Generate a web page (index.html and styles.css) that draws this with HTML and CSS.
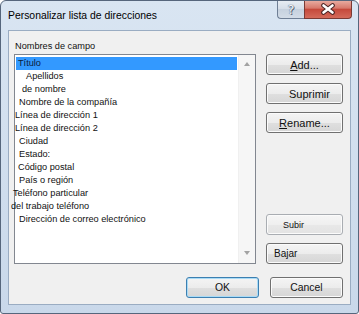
FILE: index.html
```html
<!DOCTYPE html>
<html lang="es">
<head>
    <meta charset="UTF-8">
    <title>Personalizar lista de direcciones</title>
    <link rel="stylesheet" href="styles.css">
</head>
<body>
    <div class="window">
        <div class="titlebar">
            <span class="title">Personalizar lista de direcciones</span>
            <div class="caption-btns">
                <button class="cap-btn help-btn">?</button>
                <button class="cap-btn close-btn">
                    <svg width="16" height="12" viewBox="0 0 16 12">
                        <path d="M3.5 2.5 L12.5 9.5 M12.5 2.5 L3.5 9.5" stroke="#4a2424" stroke-width="4.6" stroke-linecap="round"/>
                        <path d="M3.5 2.5 L12.5 9.5 M12.5 2.5 L3.5 9.5" stroke="#ffffff" stroke-width="2.6" stroke-linecap="round"/>
                    </svg>
                </button>
            </div>
        </div>

        <div class="client">
            <div class="field-label">Nombres de campo</div>

            <div class="main-row">
                <div class="listbox">
                    <ul class="field-list">
                        <li class="selected ind-2">Título</li>
                        <li class="ind-11">Apellidos</li>
                        <li class="ind-7">de nombre</li>
                        <li class="ind-4">Nombre de la compañía</li>
                        <li class="ind-0">Línea de dirección 1</li>
                        <li class="ind-0">Línea de dirección 2</li>
                        <li class="ind-4">Ciudad</li>
                        <li class="ind-4">Estado:</li>
                        <li class="ind-3">Código postal</li>
                        <li class="ind-4">País o región</li>
                        <li class="ind-n2">Teléfono particular</li>
                        <li class="ind-n4">del trabajo teléfono</li>
                        <li class="ind-4">Dirección de correo electrónico</li>
                    </ul>
                    <div class="scrollbar">
                        <span class="arrow arrow-up"></span>
                        <span class="arrow arrow-down"></span>
                    </div>
                </div>

                <div class="side-btns">
                    <div class="btn-group">
                        <button class="btn btn-big"><u>A</u>dd...</button>
                        <button class="btn btn-big btn-suprimir">Suprimir</button>
                        <button class="btn btn-big"><u>R</u>ename...</button>
                    </div>
                    <div class="btn-group">
                        <button class="btn btn-subir">Subir</button>
                        <button class="btn btn-bajar">Bajar</button>
                    </div>
                </div>
            </div>

            <div class="footer">
                <button class="btn btn-footer btn-default">OK</button>
                <button class="btn btn-footer">Cancel</button>
            </div>
        </div>
    </div>
</body>
</html>
```

FILE: styles.css
```css
:root {
    --frame-top: #d9e5f2;
    --frame-bottom: #c9d8ea;
    --client-bg: #f0f0f0;
    --text: #111111;
}

body {
    margin: 0;
    font-family: 'Liberation Sans', Arial, sans-serif;
    color: var(--text);
}

.window {
    width: 359px;
    height: 314px;
    box-sizing: border-box;
    border: 1px solid #56667c;
    border-radius: 6px 6px 3px 3px;
    background: linear-gradient(var(--frame-top), var(--frame-bottom));
    display: flex;
    flex-direction: column;
    overflow: hidden;
}

/* barra de titulo */
.titlebar {
    height: 29px;
    display: flex;
    justify-content: space-between;
    align-items: flex-start;
    padding-left: 7px;
    flex-shrink: 0;
}

.title {
    font-size: 10.4px;
    line-height: 29px;
    color: #000;
}

.caption-btns {
    display: flex;
    margin-top: -1px;
    margin-right: 6px;
}

.cap-btn {
    height: 19px;
    padding: 0;
    border: 1px solid #6f7f95;
    border-top: none;
    display: flex;
    align-items: center;
    justify-content: center;
}

.help-btn {
    width: 27px;
    border-right: none;
    border-radius: 0 0 0 4px;
    background: linear-gradient(#e9eef4, #d5dde8 50%, #c6d1de 51%, #d3dce7);
    font-family: 'DejaVu Sans', sans-serif;
    font-size: 13px;
    color: #f5f7fa;
    text-shadow: 0 0 1px #59667a, 0 0 1px #59667a, 1px 1px 0 #59667a;
}

.close-btn {
    width: 48px;
    border-color: #7b3a34;
    border-radius: 0 0 4px 0;
    background: linear-gradient(#eab1a6, #d7796c 45%, #c5493b 52%, #d46a5a 100%);
}

/* area cliente */
.client {
    margin: 0 7px 8px;
    flex: 1;
    border: 1px solid #9aacc2;
    background: var(--client-bg);
    padding: 9px 7px 6px 5px;
    display: flex;
    flex-direction: column;
}

.field-label {
    font-size: 9.2px;
    line-height: 12px;
    padding-left: 1px;
    margin-bottom: 2px;
}

.main-row {
    display: flex;
    gap: 10px;
    height: 210px;
}

.listbox {
    width: 242px;
    box-sizing: border-box;
    border: 1px solid #828790;
    background: #ffffff;
    display: flex;
}

.field-list {
    list-style: none;
    margin: 0;
    padding: 2px 0 0;
    flex: 1;
    font-size: 9.2px;
    line-height: 13px;
    white-space: nowrap;
}

.field-list li.selected {
    background: #3399ff;
    margin: 0 1px;
    color: #0b1c3c;
}

.ind-n4 { text-indent: -4px; }
.ind-n2 { text-indent: -2px; }
.ind-0 { text-indent: 0; }
.ind-2 { text-indent: 2px; }
.ind-3 { text-indent: 3px; }
.ind-4 { text-indent: 4px; }
.ind-7 { text-indent: 7px; }
.ind-11 { text-indent: 11px; }

.scrollbar {
    width: 17px;
    background: #f6f6f6;
    border-left: 1px solid #f0f0f0;
    display: flex;
    flex-direction: column;
    justify-content: space-between;
    align-items: center;
    padding: 7px 0 8px;
    box-sizing: border-box;
}

.arrow {
    width: 0;
    height: 0;
    border-left: 3.5px solid transparent;
    border-right: 3.5px solid transparent;
}

.arrow-up {
    border-bottom: 4px solid #a3a3a3;
}

.arrow-down {
    border-top: 4px solid #a3a3a3;
}

.side-btns {
    width: 77px;
    display: flex;
    flex-direction: column;
    justify-content: space-between;
}

.btn-group {
    display: flex;
    flex-direction: column;
    gap: 8px;
}

/* botones */
.btn {
    height: 21px;
    padding: 0;
    border: 1px solid #707070;
    border-radius: 3px;
    background: linear-gradient(#f4f4f4, #ececec 50%, #dfdfdf 51%, #d6d6d6);
    box-shadow: inset 0 0 0 1px #fbfbfb;
    font-family: 'Liberation Sans', Arial, sans-serif;
    color: #111;
    text-align: center;
}

.btn-big {
    font-size: 11px;
}

.btn-suprimir {
    text-align: left;
    padding-left: 22px;
}

.btn-subir {
    font-size: 9px;
    text-align: left;
    padding-left: 16px;
    border-color: #a9adb2;
    background: linear-gradient(#f6f6f6, #efefef 50%, #e8e8e8 51%, #e3e3e3);
}

.btn-bajar {
    font-size: 10px;
    text-align: left;
    padding-left: 7px;
}

.footer {
    margin-top: 13px;
    display: flex;
    justify-content: flex-end;
    gap: 11px;
}

.btn-footer {
    width: 73px;
    font-size: 10.4px;
}

.btn-default {
    border-color: #3c7fb1;
    box-shadow: inset 0 0 0 1px #a9dbf6;
}
```
